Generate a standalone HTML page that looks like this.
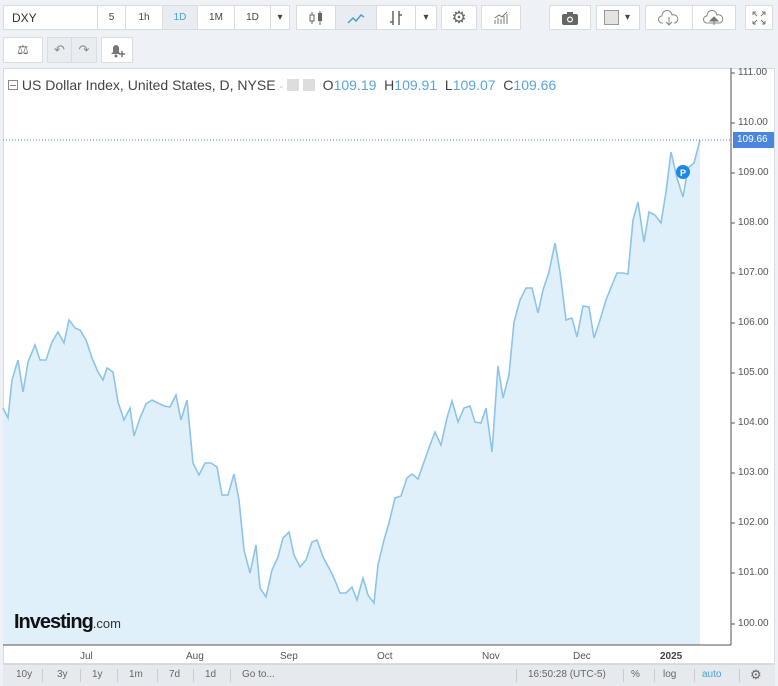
<!DOCTYPE html>
<html><head><meta charset="utf-8"><style>
*{box-sizing:border-box;margin:0;padding:0}
body{width:778px;height:686px;background:#eef1f5;font-family:"Liberation Sans",sans-serif;position:relative;overflow:hidden;color:#555}
.b{position:absolute;background:#fff;border:1px solid #d9dde2;font-size:10px;color:#444;display:flex;align-items:center;justify-content:center}
.g{background:#e9ecf0}
.ax{position:absolute;font-size:10px;color:#555}
.bt{position:absolute;top:664px;height:22px;font-size:10px;color:#666;line-height:22px}
</style></head><body>
<div class="b" style="left:3px;top:5px;width:95px;height:25px;justify-content:flex-start;padding-left:8px;font-size:12px;color:#333">DXY</div>
<div class="b" style="left:97px;top:5px;width:29px;height:25px">5</div>
<div class="b" style="left:125px;top:5px;width:38px;height:25px">1h</div>
<div class="b g" style="left:162px;top:5px;width:36px;height:25px;color:#4a9fd4">1D</div>
<div class="b" style="left:197px;top:5px;width:38px;height:25px">1M</div>
<div class="b" style="left:234px;top:5px;width:37px;height:25px">1D</div>
<div class="b" style="left:270px;top:5px;width:20px;height:25px">▾</div>
<div class="b" style="left:296px;top:5px;width:40px;height:25px"><svg width="16" height="16"><path d="M4 2v12M12 1v14" stroke="#666"/><rect x="2" y="5" width="4" height="6" fill="#fff" stroke="#666"/><rect x="10" y="3" width="4" height="8" fill="#666"/></svg></div>
<div class="b g" style="left:335px;top:5px;width:42px;height:25px"><svg width="18" height="12"><path d="M1 11l5-5 3 3 5-6 3 2" stroke="#4a9fd4" fill="none" stroke-width="1.5"/></svg></div>
<div class="b" style="left:376px;top:5px;width:40px;height:25px"><svg width="14" height="16"><path d="M4 1v14M1 12h3M10 1v14M10 5h3" stroke="#666" stroke-width="1.5"/></svg></div>
<div class="b" style="left:415px;top:5px;width:22px;height:25px">▾</div>
<div class="b" style="left:441px;top:5px;width:36px;height:25px;font-size:17px;color:#666">⚙</div>
<div class="b" style="left:481px;top:5px;width:40px;height:25px"><svg width="16" height="14"><path d="M2 13V9M5 13V7M8 13V8M11 13V5M14 13V3M2 7l4-3 3 2 5-5" stroke="#777" fill="none"/></svg></div>
<div class="b" style="left:549px;top:5px;width:42px;height:25px"><svg width="18" height="14"><rect x="1" y="3" width="16" height="11" rx="2" fill="#666"/><rect x="6" y="1" width="6" height="3" fill="#666"/><circle cx="9" cy="8.5" r="3" fill="#fff"/><circle cx="9" cy="8.5" r="1.8" fill="#666"/></svg></div>
<div class="b" style="left:596px;top:5px;width:44px;height:25px;justify-content:flex-start;padding-left:7px"><span style="width:15px;height:15px;background:#e3e3e3;border:1px solid #999;display:inline-block"></span><span style="margin-left:6px">▾</span></div>
<div class="b" style="left:645px;top:5px;width:48px;height:25px"><svg width="22" height="16"><path d="M5 13h-1a3.5 3.5 0 0 1 0-7 5 5 0 0 1 10-1 4 4 0 0 1 3 8h-1" fill="none" stroke="#888"/><path d="M11 7v8M8 12l3 3 3-3" stroke="#888" fill="none"/></svg></div>
<div class="b" style="left:692px;top:5px;width:44px;height:25px"><svg width="22" height="16"><path d="M4 13a3.5 3.5 0 0 1 0-7 5 5 0 0 1 10-1 4 4 0 0 1 3 8z" fill="none" stroke="#888"/><path d="M11 15V8M7 11l4-4 4 4z" fill="#777" stroke="#777"/></svg></div>
<div class="b" style="left:745px;top:5px;width:28px;height:25px"><svg width="14" height="14" stroke="#777" fill="none"><path d="M1 1l4 4M1 1h3M1 1v3M13 1l-4 4M13 1h-3M13 1v3M1 13l4-4M1 13h3M1 13v-3M13 13l-4-4M13 13h-3M13 13v-3"/></svg></div>
<div class="b" style="left:3px;top:37px;width:40px;height:26px;font-size:13px;color:#666">⚖</div>
<div class="b g" style="left:47px;top:37px;width:25px;height:26px;color:#888;font-size:13px">↶</div>
<div class="b g" style="left:71px;top:37px;width:26px;height:26px;color:#888;font-size:13px">↷</div>
<div class="b" style="left:101px;top:37px;width:32px;height:26px"><svg width="18" height="16"><path d="M3 12h10l-2-2V6a3 3 0 0 0-6 0v4z" fill="#777"/><circle cx="8" cy="14" r="1.5" fill="#777"/><path d="M14 9v6M11 12h6" stroke="#777" stroke-width="1.5"/></svg></div>
<div style="position:absolute;left:3px;top:68px;width:772px;height:596px;background:#fff;border:1px solid #d9dde2"></div>
<svg style="position:absolute;left:0;top:0" width="778" height="686">
<polygon fill="#dff0fb" points="3,645 3,408 8,418 12,380 18,360 23,392 28,362 35,345 40,360 46,360 52,342 58,332 64,343 69,320 75,328 80,330 86,340 92,358 98,372 103,380 107,368 113,372 118,402 124,420 130,408 134,436 140,418 146,404 152,400 158,403 164,406 170,407 176,395 181,420 187,400 193,463 199,475 205,463 211,463 217,467 222,495 228,495 234,474 239,500 244,550 250,573 256,545 260,588 266,597 272,570 278,557 283,538 289,532 294,555 300,567 306,560 312,542 317,540 323,557 329,568 334,578 340,593 346,593 352,587 357,600 363,578 368,595 374,603 378,565 384,540 389,523 395,498 401,496 407,478 412,474 418,479 424,462 430,445 435,432 441,445 447,418 452,401 458,422 464,408 470,406 475,422 481,423 486,408 492,452 498,366 503,398 509,375 514,322 520,300 526,288 532,288 538,313 543,290 549,272 555,243 560,272 566,320 572,318 577,337 583,306 589,307 594,338 600,320 606,300 612,285 617,273 623,273 628,274 633,220 638,202 644,242 649,212 655,215 661,223 666,192 671,152 677,178 683,197 688,168 694,163 700,140 700,645"/>
<polyline fill="none" stroke="#8cc4ea" stroke-width="1.6" points="3,408 8,418 12,380 18,360 23,392 28,362 35,345 40,360 46,360 52,342 58,332 64,343 69,320 75,328 80,330 86,340 92,358 98,372 103,380 107,368 113,372 118,402 124,420 130,408 134,436 140,418 146,404 152,400 158,403 164,406 170,407 176,395 181,420 187,400 193,463 199,475 205,463 211,463 217,467 222,495 228,495 234,474 239,500 244,550 250,573 256,545 260,588 266,597 272,570 278,557 283,538 289,532 294,555 300,567 306,560 312,542 317,540 323,557 329,568 334,578 340,593 346,593 352,587 357,600 363,578 368,595 374,603 378,565 384,540 389,523 395,498 401,496 407,478 412,474 418,479 424,462 430,445 435,432 441,445 447,418 452,401 458,422 464,408 470,406 475,422 481,423 486,408 492,452 498,366 503,398 509,375 514,322 520,300 526,288 532,288 538,313 543,290 549,272 555,243 560,272 566,320 572,318 577,337 583,306 589,307 594,338 600,320 606,300 612,285 617,273 623,273 628,274 633,220 638,202 644,242 649,212 655,215 661,223 666,192 671,152 677,178 683,197 688,168 694,163 700,140"/>
<line x1="3" y1="140" x2="731" y2="140" stroke="#4a86e0" stroke-dasharray="1,2"/>
<line x1="731" y1="68" x2="731" y2="645" stroke="#555"/>
<line x1="3" y1="645" x2="731" y2="645" stroke="#555"/>
<circle cx="683" cy="172" r="7" fill="#1e88e5"/>
<text x="683" y="176" font-size="9" font-weight="bold" fill="#fff" text-anchor="middle" font-family="Liberation Sans">P</text>
<g stroke="#555"><line x1="731" y1="73" x2="735" y2="73"/><line x1="731" y1="123" x2="735" y2="123"/><line x1="731" y1="173" x2="735" y2="173"/><line x1="731" y1="223" x2="735" y2="223"/><line x1="731" y1="273" x2="735" y2="273"/><line x1="731" y1="323" x2="735" y2="323"/><line x1="731" y1="373" x2="735" y2="373"/><line x1="731" y1="423" x2="735" y2="423"/><line x1="731" y1="473" x2="735" y2="473"/><line x1="731" y1="523" x2="735" y2="523"/><line x1="731" y1="573" x2="735" y2="573"/><line x1="731" y1="624" x2="735" y2="624"/></g>
</svg>
<div style="position:absolute;left:733px;top:132px;width:41px;height:16px;background:#4a86e0;color:#fff;font-size:10px;line-height:16px;padding-left:4px">109.66</div>
<div class="ax" style="left:738px;top:67px">111.00</div>
<div class="ax" style="left:738px;top:117px">110.00</div>
<div class="ax" style="left:738px;top:167px">109.00</div>
<div class="ax" style="left:738px;top:217px">108.00</div>
<div class="ax" style="left:738px;top:267px">107.00</div>
<div class="ax" style="left:738px;top:317px">106.00</div>
<div class="ax" style="left:738px;top:367px">105.00</div>
<div class="ax" style="left:738px;top:417px">104.00</div>
<div class="ax" style="left:738px;top:467px">103.00</div>
<div class="ax" style="left:738px;top:517px">102.00</div>
<div class="ax" style="left:738px;top:567px">101.00</div>
<div class="ax" style="left:738px;top:618px">100.00</div>
<div style="position:absolute;left:8px;top:77px;font-size:14px;color:#444;white-space:nowrap"><span style="display:inline-block;width:10px;height:10px;border:1px solid #888;vertical-align:0px;position:relative"><span style="position:absolute;left:1px;top:4px;width:6px;height:1px;background:#888"></span></span> US Dollar Index, United States, D, NYSE <span style="color:#bbb;font-size:11px">-</span> <span style="display:inline-block;width:12px;height:12px;background:#ddd;vertical-align:-1px"></span> <span style="display:inline-block;width:12px;height:12px;background:#ddd;vertical-align:-1px"></span> &nbsp;O<span style="color:#5aa6dc">109.19</span> &nbsp;H<span style="color:#5aa6dc">109.91</span> &nbsp;L<span style="color:#5aa6dc">109.07</span> &nbsp;C<span style="color:#5aa6dc">109.66</span></div>
<div style="position:absolute;left:14px;top:611px;font-size:20px;font-weight:bold;color:#111;letter-spacing:-1px">Investing<span style="font-size:13px;font-weight:normal;color:#333;letter-spacing:0">.com</span></div>
<div class="ax" style="left:80px;top:651px">Jul</div>
<div class="ax" style="left:186px;top:651px">Aug</div>
<div class="ax" style="left:280px;top:651px">Sep</div>
<div class="ax" style="left:377px;top:651px">Oct</div>
<div class="ax" style="left:482px;top:651px">Nov</div>
<div class="ax" style="left:573px;top:651px">Dec</div>
<div class="ax" style="left:660px;top:651px;font-weight:bold;color:#444">2025</div>
<div style="position:absolute;left:3px;top:664px;width:772px;height:22px;background:#e6e9ed;border-top:1px solid #d5d9de"></div>
<div class="bt" style="left:16px">10y</div><div class="bt" style="left:57px">3y</div><div class="bt" style="left:92px">1y</div><div class="bt" style="left:129px">1m</div><div class="bt" style="left:169px">7d</div><div class="bt" style="left:205px">1d</div><div class="bt" style="left:242px">Go to...</div>
<div class="bt" style="left:528px">16:50:28 (UTC-5)</div><div class="bt" style="left:631px">%</div><div class="bt" style="left:663px">log</div><div class="bt" style="left:702px;color:#4a9fd4">auto</div><div class="bt" style="left:750px;font-size:13px">⚙</div>
<div style="position:absolute;top:669px;height:13px;left:42px;border-left:1px solid #ccc"></div>
<div style="position:absolute;top:669px;height:13px;left:80px;border-left:1px solid #ccc"></div>
<div style="position:absolute;top:669px;height:13px;left:117px;border-left:1px solid #ccc"></div>
<div style="position:absolute;top:669px;height:13px;left:157px;border-left:1px solid #ccc"></div>
<div style="position:absolute;top:669px;height:13px;left:193px;border-left:1px solid #ccc"></div>
<div style="position:absolute;top:669px;height:13px;left:230px;border-left:1px solid #ccc"></div>
<div style="position:absolute;top:669px;height:13px;left:516px;border-left:1px solid #ccc"></div>
<div style="position:absolute;top:669px;height:13px;left:623px;border-left:1px solid #ccc"></div>
<div style="position:absolute;top:669px;height:13px;left:654px;border-left:1px solid #ccc"></div>
<div style="position:absolute;top:669px;height:13px;left:694px;border-left:1px solid #ccc"></div>
<div style="position:absolute;top:669px;height:13px;left:739px;border-left:1px solid #ccc"></div>
</body></html>
